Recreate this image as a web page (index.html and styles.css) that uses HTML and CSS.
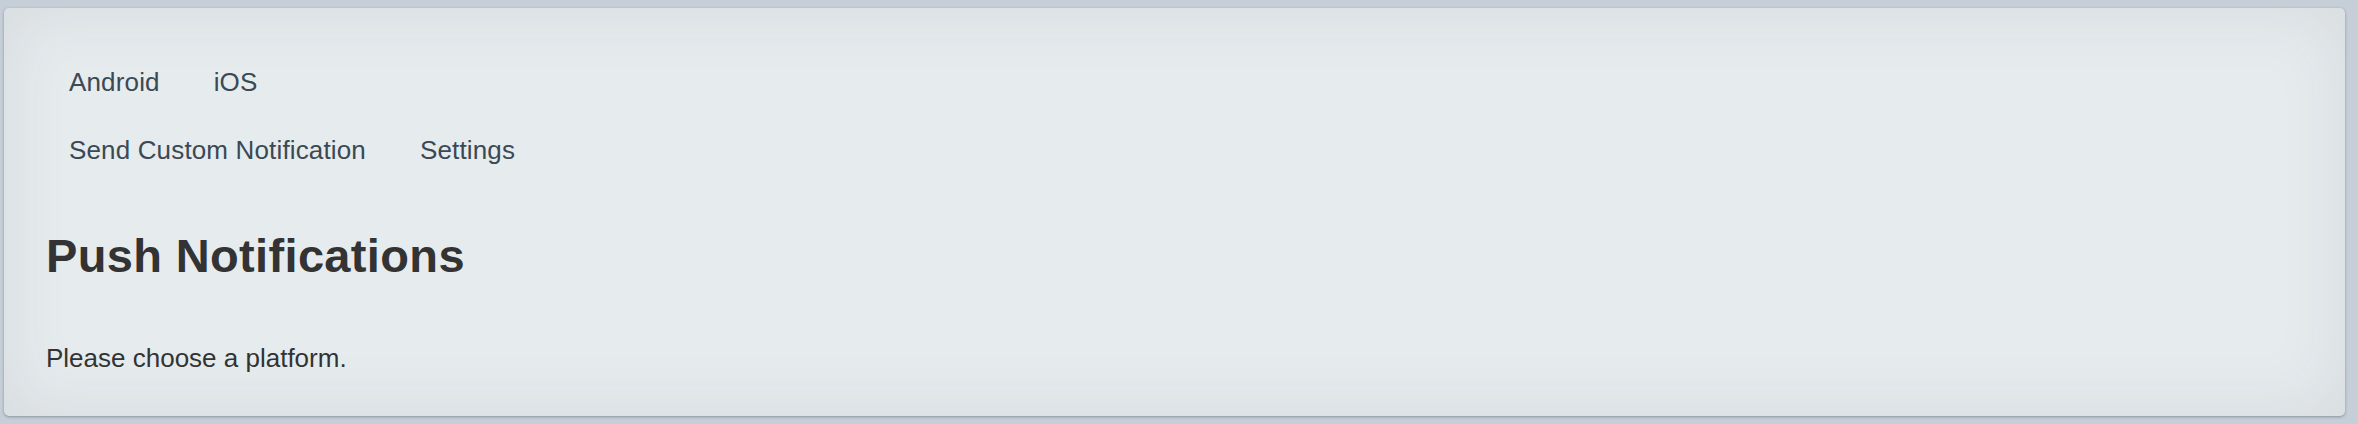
FILE: index.html
```html
<!DOCTYPE html>
<html lang="en">
<head>
<meta charset="utf-8">
<title>Push Notifications</title>
<link rel="stylesheet" href="styles.css">
</head>
<body>
<div class="panel">
  <ul class="nav nav-platforms">
    <li><a href="#">Android</a></li>
    <li><a href="#">iOS</a></li>
  </ul>
  <ul class="nav nav-actions">
    <li><a href="#">Send Custom Notification</a></li>
    <li><a href="#">Settings</a></li>
  </ul>
  <h1 class="title">Push Notifications</h1>
  <p class="hint">Please choose a platform.</p>
</div>
</body>
</html>
```

FILE: styles.css
```css
html, body {
  margin: 0;
  padding: 0;
}
body {
  background: #c6cfd7;
  font-family: "Liberation Sans", Arial, Helvetica, sans-serif;
  color: #333333;
}
.panel {
  margin: 8px 13px 8px 4px;
  height: 408px;
  box-sizing: border-box;
  padding: 54px 42px 0 42px;
  border-radius: 5px;
  background: #e6ebee;
  box-shadow: 0 1px 3px rgba(60, 75, 90, 0.45), inset 0 0 70px rgba(40, 55, 70, 0.09);
}
.nav {
  list-style: none;
  margin: 0;
  padding: 0 0 0 23px;
  display: flex;
  gap: 54px;
  font-size: 26px;
  line-height: 40px;
  letter-spacing: 0.15px;
}
.nav a {
  color: #3a4954;
  text-decoration: none;
}
.nav-actions {
  margin-top: 28px;
}
.title {
  margin: 58px 0 0 0;
  font-size: 47px;
  line-height: 56px;
  font-weight: bold;
  color: #333333;
  letter-spacing: 0.35px;
}
.hint {
  margin: 56px 0 0 0;
  font-size: 26px;
  line-height: 36px;
  color: #333333;
}
```
